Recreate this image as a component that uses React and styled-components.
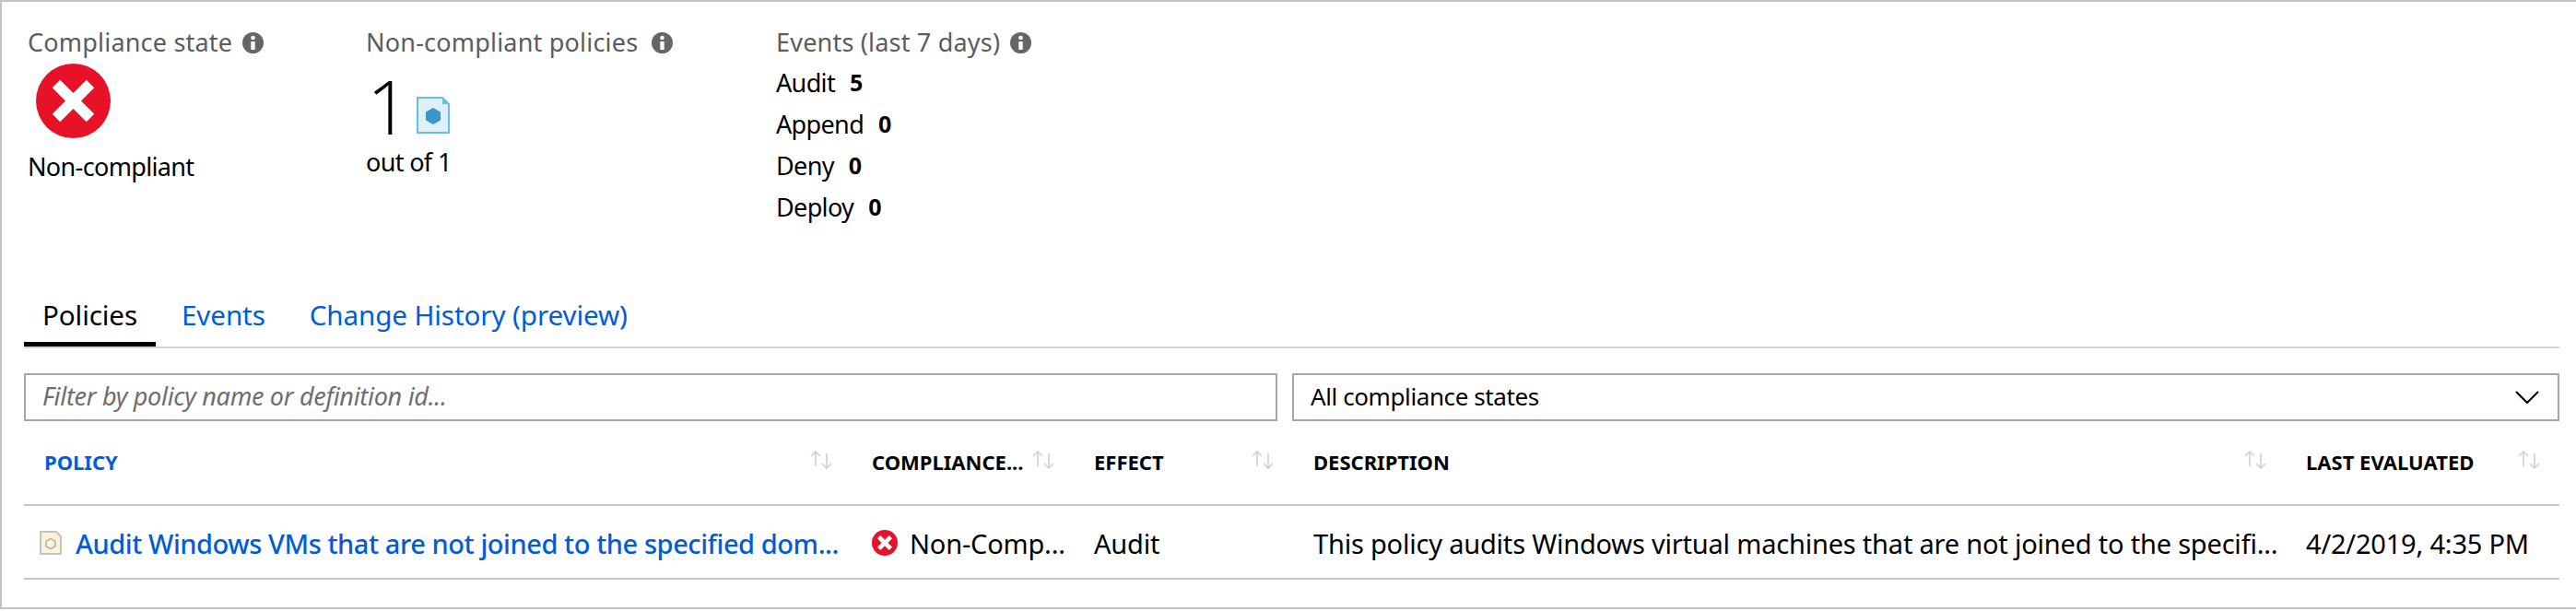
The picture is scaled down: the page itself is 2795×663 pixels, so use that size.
import React from "react";
import styled, { createGlobalStyle } from "styled-components";

const Global = createGlobalStyle`
  html, body { margin: 0; padding: 0; background: #fff; }
  body { font-family: "Noto Sans", "Open Sans", sans-serif; color: #000; }
`;

const Page = styled.div`
  box-sizing: border-box;
  width: 2795px;
  height: 661px;
  border-top: 2px solid #c4c4c4;
  border-bottom: 2px solid #c4c4c4;
  border-left: 2px solid #c4c4c4;
  padding-right: 18px;
`;

const Summary = styled.section`
  display: grid;
  grid-template-columns: 367px 445px auto;
  height: 320px;
  box-sizing: border-box;
  padding: 26px 0 0 28px;
`;

const Column = styled.div`
  display: flex;
  flex-direction: column;
  align-items: flex-start;
`;

const Heading = styled.div`
  display: flex;
  align-items: center;
  height: 34px;
  font-size: 27px;
  letter-spacing: 0.2px;
  color: #5c5c5c;
`;

const InfoIcon = styled.svg`
  width: 23px;
  height: 23px;
  margin-left: ${(p) => p.$gap}px;
  margin-top: 3px;
`;

const StateIcon = styled.svg`
  width: 81px;
  height: 81px;
  margin: 7px 0 0 9px;
`;

const Caption = styled.div`
  font-size: 27px;
  line-height: 34px;
  letter-spacing: -0.65px;
  margin-top: ${(p) => p.$top}px;
`;

const CountRow = styled.div`
  display: flex;
  align-items: flex-end;
  margin-top: 8px;
  height: 89px;
`;

const BigNumber = styled.span`
  font-size: 82px;
  line-height: 89px;
  font-weight: 300;
  margin-left: 1px;
  width: 54px;
  font-family: "Open Sans", "Noto Sans", sans-serif;
`;

const FileIcon = styled.svg`
  width: 36px;
  height: 40px;
  margin-bottom: 14px;
`;

const EventList = styled.div`
  margin-top: 5px;
`;

const EventRow = styled.div`
  font-size: 27px;
  line-height: 45px;
  letter-spacing: -0.65px;
  display: flex;
  gap: 16px;
`;

const EventCount = styled.b`
  font-weight: 700;
  font-size: 25px;
`;

const TabBar = styled.nav`
  display: flex;
  box-sizing: border-box;
  margin-left: 24px;
  height: 56px;
  border-bottom: 2px solid #d4d4d4;
`;

const Tab = styled.div`
  box-sizing: border-box;
  height: 54px;
  padding: 0 20px;
  margin-right: 8px;
  font-size: 29.6px;
  line-height: 40px;
  letter-spacing: -0.1px;
  color: ${(p) => (p.$active ? "#000" : "#015cda")};
  border-bottom: ${(p) => (p.$active ? "5px solid #000" : "none")};
`;

const FilterRow = styled.div`
  display: grid;
  grid-template-columns: 1360px 1375px;
  gap: 16px;
  margin: 27px 0 0 24px;
`;

const FilterField = styled.div`
  box-sizing: border-box;
  height: 52px;
  border: 2px solid #a6a6a6;
  padding: 0 19px 3px 18px;
  display: flex;
  align-items: center;
  justify-content: space-between;
  font-size: 26px;
  letter-spacing: -0.4px;
`;

const Placeholder = styled.span`
  font-style: italic;
  font-size: 27px;
  letter-spacing: -0.3px;
  color: #6e6e6e;
`;

const Chevron = styled.svg`
  width: 26px;
  height: 16px;
  margin: 3px 1px 0 0;
`;

const Table = styled.div`
  margin-left: 24px;
`;

const Row = styled.div`
  display: grid;
  grid-template-columns: 898px 241px 238px 1077px 297px;
  height: ${(p) => p.$height}px;
  border-bottom: 2px solid #c8c8c8;
`;

const HeadCell = styled.div`
  display: flex;
  align-items: center;
  padding: 0 21px 2px 22px;
  min-width: 0;
  position: relative;
`;

const HeadLabel = styled.span`
  font-size: 22px;
  font-weight: 700;
  letter-spacing: 0;
  white-space: nowrap;
  color: ${(p) => (p.$sorted ? "#015cda" : "#000")};
`;

const SortIcon = styled.svg`
  width: 25px;
  height: 20px;
  position: absolute;
  right: 20px;
  top: 32px;
`;

const Cell = styled.div`
  display: flex;
  align-items: center;
  padding: 2px 0 0 22px;
  min-width: 0;
  font-size: 29px;
  letter-spacing: -0.2px;
  gap: ${(p) => p.$gap || 0}px;
`;

const CellText = styled.span`
  white-space: nowrap;
  color: ${(p) => (p.$link ? "#015cda" : "#000")};
  font-weight: ${(p) => (p.$link ? 500 : 400)};
  letter-spacing: ${(p) => (p.$link ? "-0.43px" : "inherit")};
`;

const PolicyGlyph = styled.svg`
  flex: none;
  width: 24px;
  height: 26px;
  margin-left: -5px;
`;

const SmallState = styled.svg`
  flex: none;
  width: 28px;
  height: 28px;
`;

const Info = ({ gap }) => (
  <InfoIcon $gap={gap} viewBox="0 0 23 23">
    <circle cx="11.5" cy="11.5" r="11.5" fill="#666" />
    <circle cx="11.5" cy="6" r="2.3" fill="#fff" />
    <rect x="9.3" y="10" width="4.4" height="9" rx="0.5" fill="#fff" />
  </InfoIcon>
);

const ErrorMark = ({ as: C, size }) => (
  <C viewBox="0 0 81 81">
    <circle cx="40.5" cy="40.5" r="40.5" fill="#e81228" />
    <path d="M22 22 L59 59 M59 22 L22 59" stroke="#fff" strokeWidth={size} />
  </C>
);

const Sort = () => (
  <SortIcon viewBox="0 0 25 20" fill="none" stroke="#d0d0d0" strokeWidth="1.6">
    <path d="M6 17V1M1 6l5-5 5 5" />
    <path d="M18 3v16M13 14l5 5 5-5" />
  </SortIcon>
);

export default function App() {
  return (
    <Page>
      <Global />
      <Summary>
        <Column>
          <Heading>
            Compliance state
            <Info gap={11} />
          </Heading>
          <ErrorMark as={StateIcon} size={12} />
          <Caption $top={14}>Non-compliant</Caption>
        </Column>
        <Column>
          <Heading>
            Non-compliant policies
            <Info gap={15} />
          </Heading>
          <CountRow>
            <BigNumber>1</BigNumber>
            <FileIcon viewBox="0 0 36 40">
              <path d="M1 1H28L35 8V39H1Z" fill="#dff0f8" stroke="#68bfe3" strokeWidth="2" />
              <path d="M28 1V8H35Z" fill="#68bfe3" />
              <path d="M18 12L26 16.5V25.5L18 30L10 25.5V16.5Z" fill="#3a97c9" />
            </FileIcon>
          </CountRow>
          <Caption $top={0}>out of 1</Caption>
        </Column>
        <Column>
          <Heading>
            Events (last 7 days)
            <Info gap={11} />
          </Heading>
          <EventList>
            <EventRow>Audit <EventCount>5</EventCount></EventRow>
            <EventRow>Append <EventCount>0</EventCount></EventRow>
            <EventRow>Deny <EventCount>0</EventCount></EventRow>
            <EventRow>Deploy <EventCount>0</EventCount></EventRow>
          </EventList>
        </Column>
      </Summary>

      <TabBar>
        <Tab $active>Policies</Tab>
        <Tab>Events</Tab>
        <Tab>Change History (preview)</Tab>
      </TabBar>

      <FilterRow>
        <FilterField>
          <Placeholder>Filter by policy name or definition id...</Placeholder>
        </FilterField>
        <FilterField>
          <span>All compliance states</span>
          <Chevron viewBox="0 0 26 16" fill="none" stroke="#000" strokeWidth="2.2">
            <path d="M1 2l12 12L25 2" />
          </Chevron>
        </FilterField>
      </FilterRow>

      <Table>
        <Row $height={90}>
          <HeadCell><HeadLabel $sorted>POLICY</HeadLabel><Sort /></HeadCell>
          <HeadCell><HeadLabel>COMPLIANCE...</HeadLabel><Sort /></HeadCell>
          <HeadCell><HeadLabel>EFFECT</HeadLabel><Sort /></HeadCell>
          <HeadCell><HeadLabel>DESCRIPTION</HeadLabel><Sort /></HeadCell>
          <HeadCell><HeadLabel>LAST EVALUATED</HeadLabel><Sort /></HeadCell>
        </Row>
        <Row $height={78}>
          <Cell $gap={15}>
            <PolicyGlyph viewBox="0 0 24 26">
              <path d="M1 1H18L23 6V25H1Z" fill="#fdf3d8" stroke="#c4c4c4" strokeWidth="2" />
              <path d="M12 8.5L17 11.3V16.9L12 19.7L7 16.9V11.3Z" fill="none" stroke="#a8a8a8" strokeWidth="1.4" />
            </PolicyGlyph>
            <CellText $link>Audit Windows VMs that are not joined to the specified dom...</CellText>
          </Cell>
          <Cell $gap={13}>
            <ErrorMark as={SmallState} size={14} />
            <CellText>Non-Comp...</CellText>
          </Cell>
          <Cell><CellText>Audit</CellText></Cell>
          <Cell><CellText>This policy audits Windows virtual machines that are not joined to the specifi...</CellText></Cell>
          <Cell><CellText>4/2/2019, 4:35 PM</CellText></Cell>
        </Row>
      </Table>
    </Page>
  );
}
